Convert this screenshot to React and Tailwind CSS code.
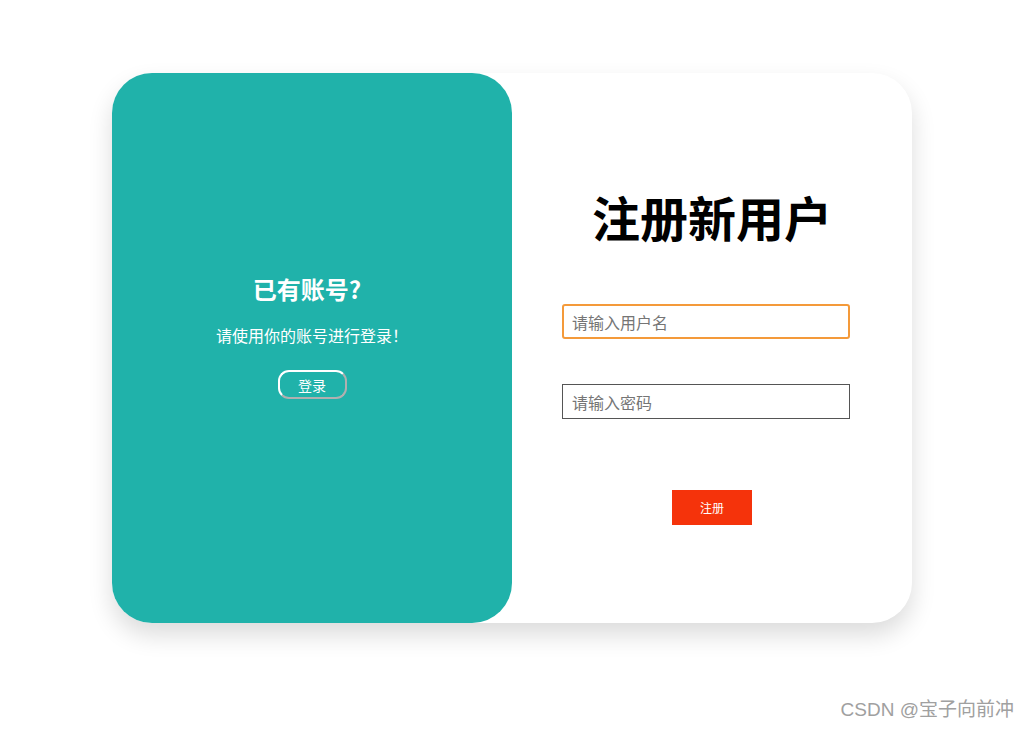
export default function App() {
  return (
    <div
      className="relative min-h-screen bg-white"
      style={{ fontFamily: '"Microsoft YaHei", "Noto Sans CJK SC", "Noto Sans", sans-serif' }}
    >
      <div className="pt-[73px] pl-[112px]">
        {/* Card */}
        <div className="flex w-[800px] h-[550px] rounded-[40px] bg-white shadow-[0_12px_24px_rgba(0,0,0,0.14)]">
          {/* Left panel */}
          <div className="w-[400px] h-full rounded-[40px] bg-[#20b2aa] flex flex-col items-center pt-[200px] text-white">
            <h2 className="text-[24px] leading-[32px] font-bold pr-[10px]">已有账号?</h2>
            <p className="mt-[18px] text-[16px] leading-[24px]">请使用你的账号进行登录！</p>
            <button className="mt-[23px] w-[69px] h-[29px] rounded-[11px] border-2 border-t-white border-l-white border-b-[#b0b0b0] border-r-[#b0b0b0] text-[14px] leading-none text-white">
              登录
            </button>
          </div>

          {/* Right panel */}
          <div className="flex-1 flex flex-col items-center pt-[119px]">
            <h1 className="text-[48px] leading-[48px] font-bold text-black">注册新用户</h1>
            <input
              className="self-start ml-[50px] mt-[64px] w-[288px] h-[35px] rounded-[3px] border-2 border-[#f49a3a] pl-[8px] text-[16px] outline-none placeholder:text-[#757575]"
              placeholder="请输入用户名"
            />
            <input
              type="password"
              className="self-start ml-[50px] mt-[45px] w-[288px] h-[35px] border border-[#555] pl-[9px] text-[16px] outline-none placeholder:text-[#757575]"
              placeholder="请输入密码"
            />
            <button className="mt-[71px] w-[80px] h-[35px] bg-[#f5330b] text-white text-[12px]">
              注册
            </button>
          </div>
        </div>
      </div>

      {/* Watermark */}
      <div
        className="absolute right-[14px] bottom-[5px] text-[19px] text-[#a0a0a0]"
        style={{ fontFamily: '"Liberation Sans", "Noto Sans CJK SC", sans-serif' }}
      >
        CSDN @宝子向前冲
      </div>
    </div>
  );
}
